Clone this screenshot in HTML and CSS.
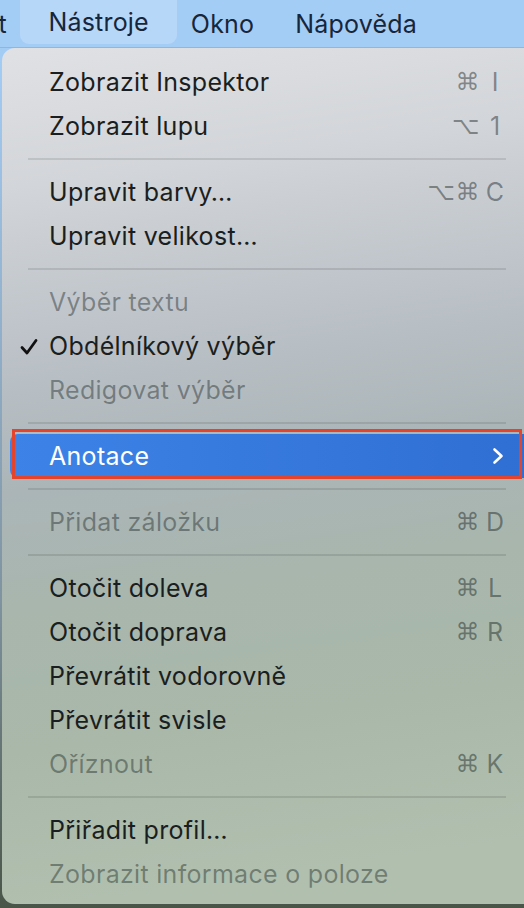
FILE: index.html
```html
<!DOCTYPE html>
<html lang="cs">
<head>
<meta charset="utf-8">
<title>Nástroje</title>
<link rel="stylesheet" href="styles.css">
</head>
<body>
<div class="screen">
  <div class="bar">
    <span class="bar-item bar-cut">t</span>
    <span class="bar-item bar-active">Nástroje</span>
    <span class="bar-item">Okno</span>
    <span class="bar-item">Nápověda</span>
  </div>
  <div class="menu">
    <div class="row"><span class="label">Zobrazit Inspektor</span><span class="keys"><span class="mod">⌘</span><span class="key">I</span></span></div>
    <div class="row"><span class="label">Zobrazit lupu</span><span class="keys"><span class="mod">⌥</span><span class="key">1</span></span></div>
    <div class="sep"></div>
    <div class="row"><span class="label">Upravit barvy…</span><span class="keys"><span class="mod">⌥⌘</span><span class="key">C</span></span></div>
    <div class="row"><span class="label">Upravit velikost…</span></div>
    <div class="sep"></div>
    <div class="row disabled"><span class="label">Výběr textu</span></div>
    <div class="row"><svg class="check" viewBox="0 0 18 18" width="18" height="18"><path d="M2 9.5 L7 15 L16 2.5" fill="none" stroke="#111" stroke-width="2.8" stroke-linecap="round" stroke-linejoin="round"/></svg><span class="label">Obdélníkový výběr</span></div>
    <div class="row disabled"><span class="label">Redigovat výběr</span></div>
    <div class="sep"></div>
    <div class="row active"><span class="label">Anotace</span><svg class="chev" viewBox="0 0 12 18" width="12" height="18"><path d="M2.5 2.5 L9.5 9 L2.5 15.5" fill="none" stroke="#fff" stroke-width="2.6" stroke-linecap="round" stroke-linejoin="round"/></svg><span class="mark"></span></div>
    <div class="sep"></div>
    <div class="row disabled"><span class="label">Přidat záložku</span><span class="keys"><span class="mod">⌘</span><span class="key">D</span></span></div>
    <div class="sep"></div>
    <div class="row"><span class="label">Otočit doleva</span><span class="keys"><span class="mod">⌘</span><span class="key">L</span></span></div>
    <div class="row"><span class="label">Otočit doprava</span><span class="keys"><span class="mod">⌘</span><span class="key">R</span></span></div>
    <div class="row"><span class="label">Převrátit vodorovně</span></div>
    <div class="row"><span class="label">Převrátit svisle</span></div>
    <div class="row disabled"><span class="label">Oříznout</span><span class="keys"><span class="mod">⌘</span><span class="key">K</span></span></div>
    <div class="sep"></div>
    <div class="row"><span class="label">Přiřadit profil…</span></div>
    <div class="row disabled"><span class="label">Zobrazit informace o poloze</span></div>
  </div>
</div>
</body>
</html>
```
FILE: styles.css
```css
html, body {
  margin: 0;
  padding: 0;
}
body {
  width: 524px;
  height: 908px;
  overflow: hidden;
  background: linear-gradient(#a3ccf5 0, #a3ccf5 60px, #7f93a0 600px, #4a5548 908px);
  font-family: Inter, "Noto Sans", sans-serif;
}
.screen {
  width: 524px;
  height: 908px;
  overflow: hidden;
}
.bar {
  height: 47px;
  display: flex;
  align-items: stretch;
  background: #a4cdf6;
  border-bottom: 1px solid #8fb6e0;
  color: #17263a;
  font-size: 25px;
  letter-spacing: 0.2px;
}
.bar-item {
  display: flex;
  align-items: center;
  padding: 0 20.5px;
}
.bar-cut {
  margin-left: -22px;
}
.bar-active {
  background: #b6d7f8;
  border-radius: 0 0 9px 9px;
  padding: 0 28.5px 0 28px;
  margin: 0 -7px 3px -7px;
}
.menu {
  position: relative;
  margin-left: 2px;
  width: 540px;
  height: 856px;
  box-sizing: border-box;
  padding: 12px 0 8px;
  border-radius: 13px 0 0 13px;
  background: linear-gradient(172deg, #e0e1e4 0, #d2d5d9 140px, #bcc2c8 300px, #abb5b8 440px, #a8b6ad 560px, #a9b8a9 700px, #b0bfae 856px);
  color: #1b1e20;
  font-size: 25px;
}
.row {
  position: relative;
  height: 44px;
  display: flex;
  align-items: center;
  padding: 0 36px 0 47px;
}
.label {
  flex: 1;
  letter-spacing: 0.3px;
}
.disabled {
  color: rgba(20, 30, 30, 0.42);
}
.keys {
  display: flex;
  align-items: center;
  color: rgba(20, 30, 30, 0.45);
  font-family: "DejaVu Sans", sans-serif;
}
.mod {
  font-size: 24px;
  letter-spacing: 0.5px;
}
.key {
  width: 22px;
  text-align: center;
  font-family: Inter, sans-serif;
  font-size: 25px;
  margin-left: 4px;
}
.check {
  position: absolute;
  left: 18px;
  top: 14px;
}
.sep {
  height: 22px;
  display: flex;
  align-items: center;
  padding: 0 36px 0 26px;
}
.sep::before {
  content: "";
  flex: 1;
  height: 2px;
  background: rgba(0, 0, 0, 0.1);
}
.active {
  margin: 0 0 0 8px;
  padding-left: 39px;
  border-radius: 8px 0 0 8px;
  background: linear-gradient(90deg, #3d83e7, #2f6ed2);
  color: #fff;
}
.chev {
  margin-right: 2px;
}
.mark {
  position: absolute;
  left: 2px;
  top: -5px;
  width: 504px;
  height: 44px;
  border: 3px solid #e4432c;
}
```
